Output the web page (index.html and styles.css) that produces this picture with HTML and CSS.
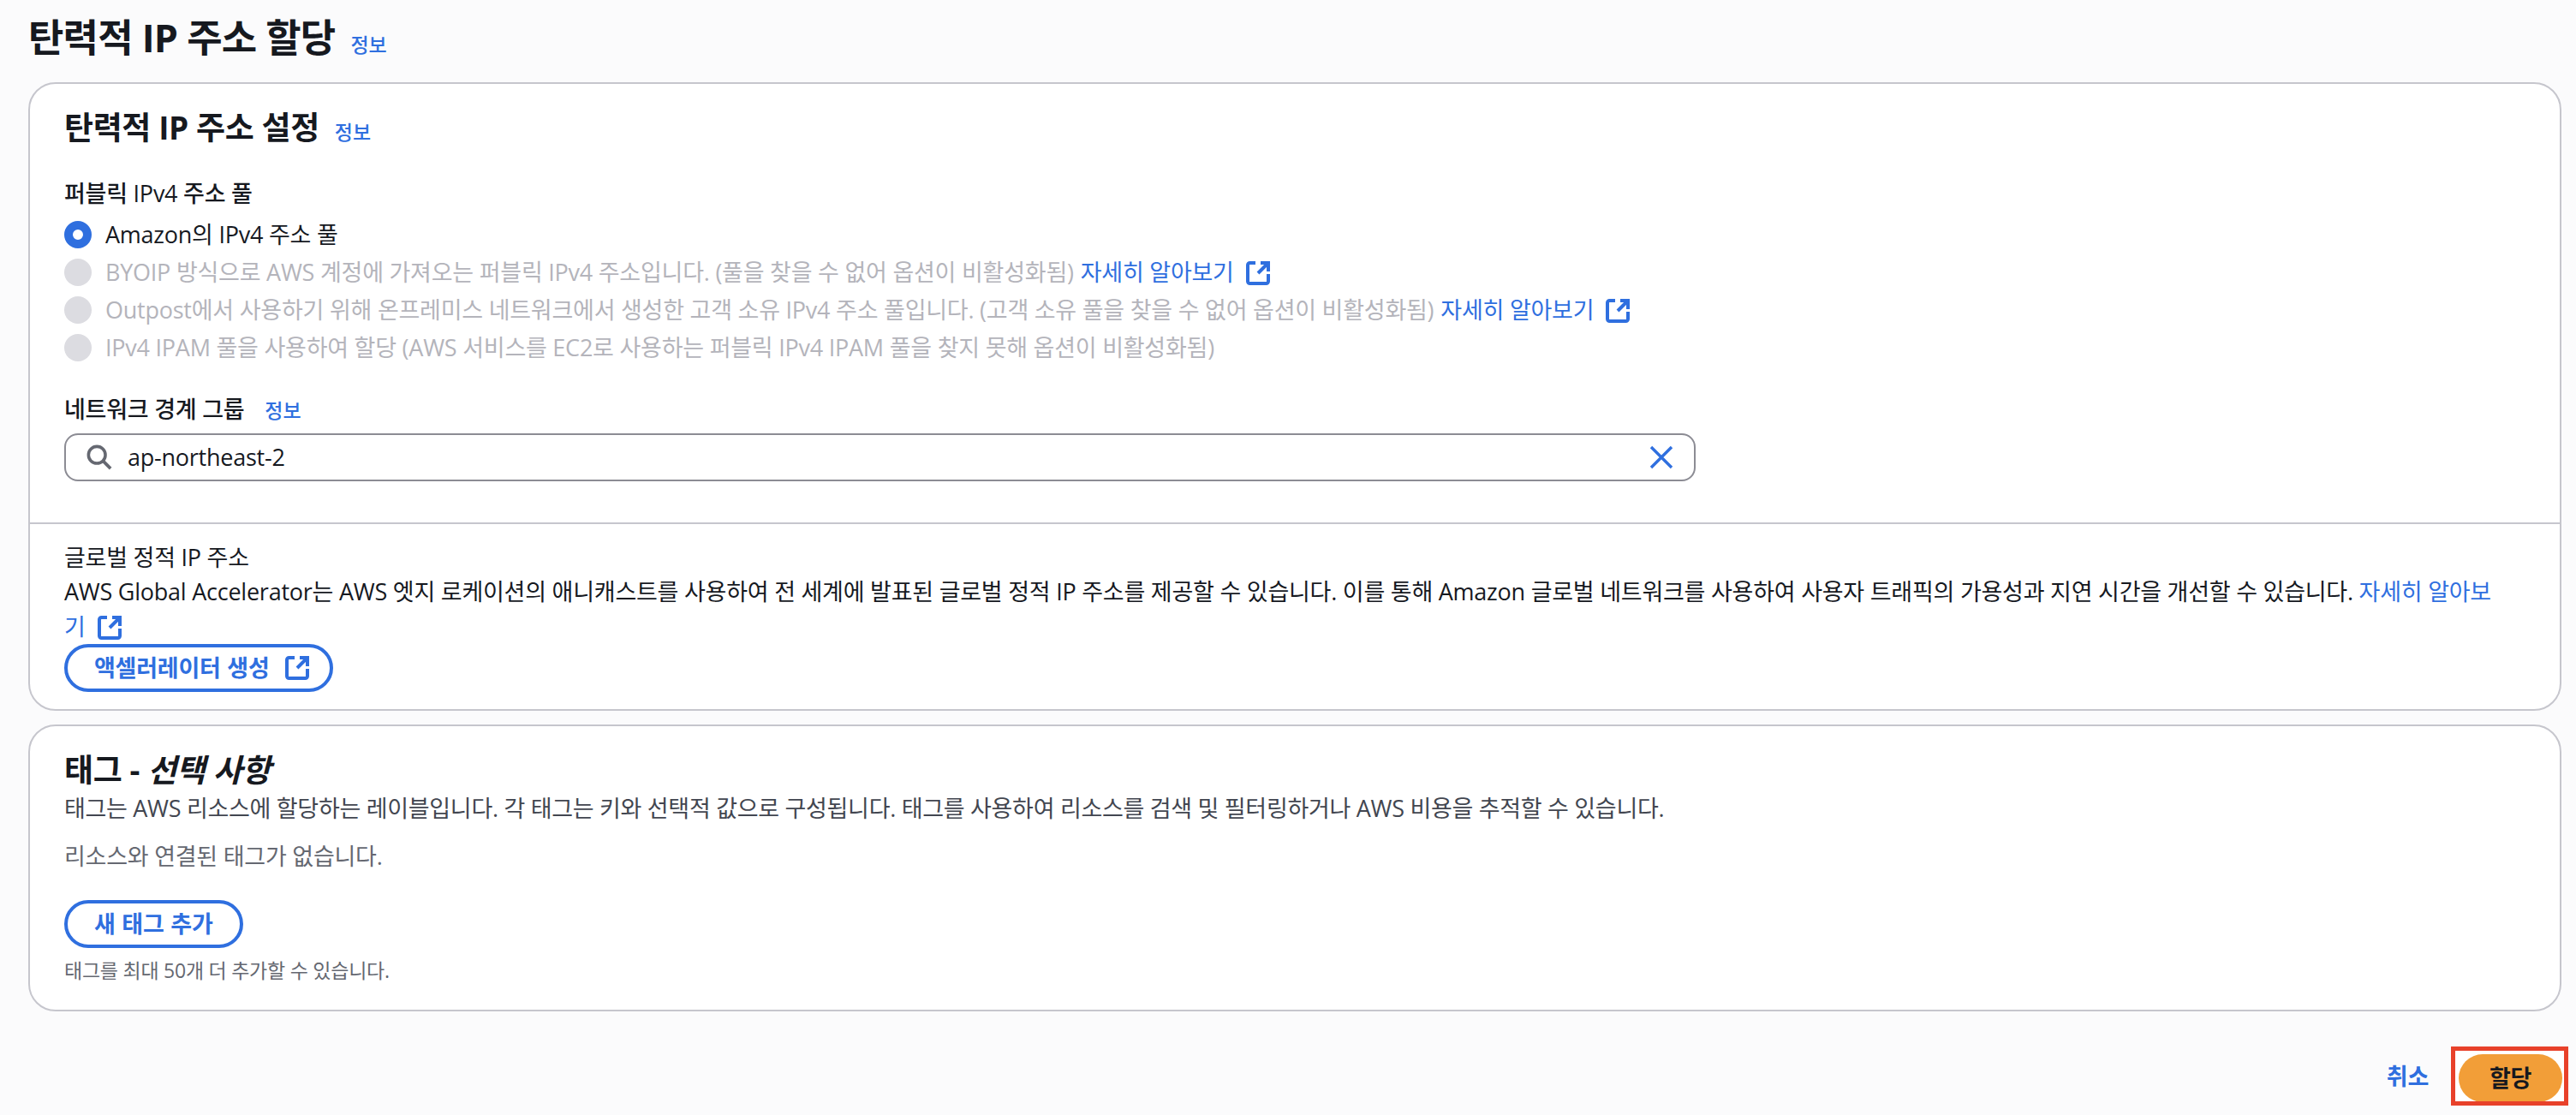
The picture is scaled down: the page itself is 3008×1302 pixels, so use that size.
FILE: index.html
```html
<!DOCTYPE html>
<html lang="ko">
<head>
<meta charset="utf-8">
<title>탄력적 IP 주소 할당</title>
<link rel="stylesheet" href="styles.css">
</head>
<body>
<svg class="defs" width="0" height="0" aria-hidden="true">
  <symbol id="ext" viewBox="0 0 28 28"><path d="M11 2H4.500A2.500 2.500 0 0 0 2 4.500v19A2.500 2.500 0 0 0 4.500 26h19a2.500 2.500 0 0 0 2.500-2.500V15" fill="none" stroke="currentColor" stroke-width="4"/><path d="M17 2h9v10M25.500 2.500L14 14" fill="none" stroke="currentColor" stroke-width="4"/></symbol>
</svg>
<header class="page-head">
  <h1 class="page-title">탄력적 IP 주소 할당</h1><a class="info info-h1">정보</a>
</header>
<section class="card">
  <div class="card-main">
    <div class="card-head"><h2 class="card-title">탄력적 IP 주소 설정</h2><a class="info info-h2">정보</a></div>
    <div class="field-label">퍼블릭 IPv4 주소 풀</div>
    <div class="radios">
      <div class="radio"><span class="dot dot-on"></span><span>Amazon의 IPv4 주소 풀</span></div>
      <div class="radio off"><span class="dot"></span><span>BYOIP 방식으로 AWS 계정에 가져오는 퍼블릭 IPv4 주소입니다. (풀을 찾을 수 없어 옵션이 비활성화됨)</span><a class="link">자세히 알아보기<svg class="ext"><use href="#ext"/></svg></a></div>
      <div class="radio off"><span class="dot"></span><span>Outpost에서 사용하기 위해 온프레미스 네트워크에서 생성한 고객 소유 IPv4 주소 풀입니다. (고객 소유 풀을 찾을 수 없어 옵션이 비활성화됨)</span><a class="link">자세히 알아보기<svg class="ext"><use href="#ext"/></svg></a></div>
      <div class="radio off"><span class="dot"></span><span>IPv4 IPAM 풀을 사용하여 할당 (AWS 서비스를 EC2로 사용하는 퍼블릭 IPv4 IPAM 풀을 찾지 못해 옵션이 비활성화됨)</span></div>
    </div>
    <div class="field-label nbg-label">네트워크 경계 그룹<a class="info info-label">정보</a></div>
    <div class="search">
      <svg class="search-icon" viewBox="0 0 32 32"><circle cx="13" cy="13" r="10.500" fill="none" stroke="#656871" stroke-width="3.800"/><path d="M21 21l9 9" stroke="#656871" stroke-width="4" fill="none"/></svg>
      <span class="search-value">ap-northeast-2</span>
      <svg class="clear-icon" viewBox="0 0 28 28"><path d="M2 2l24 24M26 2L2 26" stroke="#2f6fdf" stroke-width="3.400" fill="none"/></svg>
    </div>
  </div>
  <div class="card-sub">
    <div class="sub-title">글로벌 정적 IP 주소</div>
    <p class="sub-text">AWS Global Accelerator는 AWS 엣지 로케이션의 애니캐스트를 사용하여 전 세계에 발표된 글로벌 정적 IP 주소를 제공할 수 있습니다. 이를 통해 Amazon 글로벌 네트워크를 사용하여 사용자 트래픽의 가용성과 지연 시간을 개선할 수 있습니다. <a class="link">자세히 알아보기<svg class="ext"><use href="#ext"/></svg></a></p>
    <a class="btn btn-icon">액셀러레이터 생성<svg class="ext btn-ext"><use href="#ext"/></svg></a>
  </div>
</section>
<section class="card card-tags">
  <h2 class="card-title">태그 - <em>선택 사항</em></h2>
  <p class="tag-desc">태그는 AWS 리소스에 할당하는 레이블입니다. 각 태그는 키와 선택적 값으로 구성됩니다. 태그를 사용하여 리소스를 검색 및 필터링하거나 AWS 비용을 추적할 수 있습니다.</p>
  <p class="tag-empty">리소스와 연결된 태그가 없습니다.</p>
  <a class="btn">새 태그 추가</a>
  <p class="tag-limit">태그를 최대 50개 더 추가할 수 있습니다.</p>
</section>
<footer class="actions">
  <a class="cancel">취소</a>
  <span class="highlight"><a class="primary">할당</a></span>
</footer>
</body>
</html>
```
FILE: styles.css
```css
* { box-sizing: border-box; }
html, body { margin: 0; padding: 0; }
body {
  width: 3008px;
  height: 1302px;
  overflow: hidden;
  background: #fbfbfc;
  color: #16191f;
  font-family: "Open Sans", "Noto Sans CJK KR", sans-serif;
  font-size: 27px;
  letter-spacing: -0.24px;
  line-height: 42px;
  padding: 0 17px 0 33px;
}
.defs { position: absolute; }
a { text-decoration: none; }
.link, .info, .cancel { color: #2f6fdf; }
.page-head { display: flex; align-items: baseline; height: 96px; padding-top: 14px; }
.page-title { margin: 0; font-size: 45px; line-height: 60px; font-weight: 700; letter-spacing: -0.8px; }
.info { font-size: 23px; font-weight: 500; letter-spacing: 0; }
.info-h1 { margin-left: 18px; }
.info-h2 { margin-left: 18px; }
.info-label { margin-left: 24px; }
.card { background: #fff; border: 2px solid #c6c6cd; border-radius: 32px; }
.card-main { padding: 26px 40px 48px; border-bottom: 2px solid #c6c6cd; }
.card-head { display: flex; align-items: baseline; }
.card-title { margin: 0; font-size: 37px; line-height: 50px; font-weight: 700; letter-spacing: -0.4px; }
.card-title em { font-style: italic; }
.field-label { font-weight: 500; margin-top: 31px; line-height: 40px; }
.radios { margin-top: 6px; }
.radio { display: flex; align-items: center; height: 44px; }
.radio.off { color: #b4b4bb; }
.radio .link { margin-left: 8px; }
.dot { width: 32px; height: 32px; border-radius: 50%; background: #dcdce1; margin-right: 16px; flex: none; }
.dot-on { background: #fff; border: 10px solid #2f6fdf; }
.nbg-label { margin-top: 30px; }
.search {
  display: flex; align-items: center; width: 1905px; height: 56px; margin-top: 7px;
  border: 2px solid #8c8c94; border-radius: 16px; padding: 0 24px;
}
.search-icon { width: 30px; height: 30px; flex: none; }
.search-value { margin-left: 18px; flex: 1; }
.clear-icon { width: 28px; height: 28px; flex: none; }
.ext { width: 28px; height: 28px; margin-left: 14px; vertical-align: -5px; }
.card-sub { padding: 20px 40px 20px; }
.sub-title { line-height: 38px; }
.sub-text { margin: 0; max-width: 2850px; line-height: 41px; }
.btn {
  display: inline-flex; align-items: center; height: 56px; padding: 0 31px;
  border: 4px solid #2f6fdf; border-radius: 28px; color: #2f6fdf; font-weight: 700; line-height: 44px;
  word-spacing: 1px;
}
.btn-icon { padding-right: 24px; }
.btn-ext { margin-left: 18px; }
.card-tags { margin-top: 16px; padding: 27px 40px 30px; height: 335px; }
.card-tags .card-title { line-height: 48px; }
.tag-desc { margin: 0; color: #424650; letter-spacing: -0.3px; }
.tag-empty { margin: 14px 0 0; color: #656871; }
.tag-limit { margin: 10px 0 0; font-size: 23px; line-height: 32px; color: #656871; }
.card-tags .btn { margin-top: 30px; }
.actions { display: flex; justify-content: flex-end; align-items: flex-start; margin-top: 41px; }
.cancel { font-weight: 600; margin: 14px 26px 0 0; }
.highlight { display: block; width: 137px; height: 69px; border: 5px solid #e8412a; background: #fff; padding: 4px 4px 0; margin-right: -8px; overflow: hidden; flex: none; }
.primary { display: block; width: 121px; height: 56px; border-radius: 28px; background: #f29e38; color: #16191f; font-weight: 700; text-align: center; line-height: 56px; }
```
